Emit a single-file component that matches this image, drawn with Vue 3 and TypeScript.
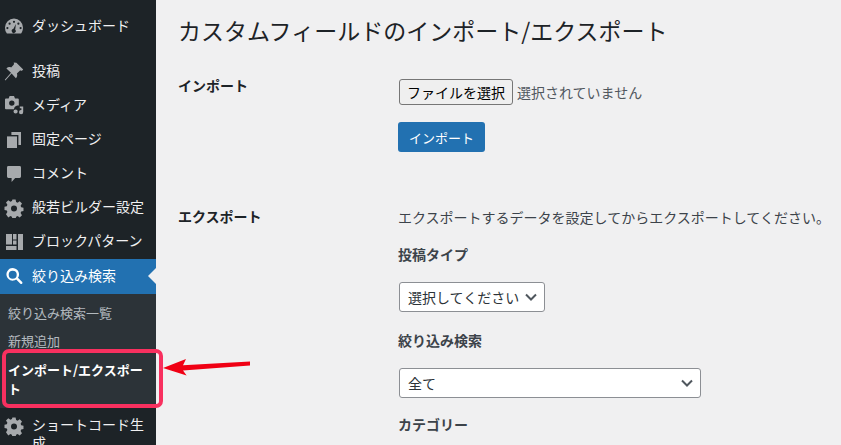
<script setup lang="ts">
interface Item { label: string; icon: string }
const items: Item[] = [
  { label: '投稿', icon: 'pin' },
  { label: 'メディア', icon: 'media' },
  { label: '固定ページ', icon: 'page' },
  { label: 'コメント', icon: 'comment' },
  { label: '般若ビルダー設定', icon: 'gear' },
  { label: 'ブロックパターン', icon: 'block' },
]
const gear = 'M8.4 1.6h3.2l.5 2.5 1.5.6 2.1-1.4 2.3 2.3-1.4 2.1.6 1.5 2.3.5v3.4l-2.3.5-.6 1.5 1.4 2.1-2.3 2.3-2.1-1.4-1.5.6-.5 2.3H8.4l-.5-2.3-1.5-.6-2.1 1.4L2 16.2l1.4-2.1-.6-1.5-2.3-.5V8.7l2.3-.5.6-1.5L2 4.6l2.3-2.3 2.1 1.4 1.5-.6zM10 7.4a3 3 0 1 0 0 6 3 3 0 0 0 0-6z'
</script>

<template>
  <div class="page">
    <aside class="side">
      <a class="item first">
        <svg class="ico" viewBox="0 0 20 20"><path d="M2.9 16.6A9 9 0 0 1 1 10.6a8.8 8.8 0 0 1 18 0c0 2.3-.7 4.4-1.9 6H2.9zM10 3.7a1.1 1.1 0 1 0 0 2.2 1.1 1.1 0 0 0 0-2.2zM5.6 5.6a1.1 1.1 0 1 0 0 2.2 1.1 1.1 0 0 0 0-2.2zm8.8 0a1.1 1.1 0 1 0 0 2.2 1.1 1.1 0 0 0 0-2.2zM3.4 10a1.1 1.1 0 1 0 0 2.2 1.1 1.1 0 0 0 0-2.2zm13.2 0a1.1 1.1 0 1 0 0 2.2 1.1 1.1 0 0 0 0-2.2zM11.9 7l-2.6 5.1a2 2 0 1 0 1.9.6z" fill-rule="evenodd"/></svg>
        <span>ダッシュボード</span>
      </a>
      <a v-for="it in items" :key="it.label" class="item">
        <svg class="ico" viewBox="0 0 20 20">
          <path v-if="it.icon === 'pin'" d="M12.4.8l6.8 6.8-1.5 1.3c-.8-.4-1.6-.4-2.2 0l-2.6 2.6c.7 1.7.3 3.4-1 4.7L7.6 11.4 1.4 18.4l-.6-.6 6.2-7-4.6-4.4c1.3-1.3 3-1.7 4.7-1l2.6-2.6c.4-.6.4-1.4 0-2.2z"/>
          <g v-else-if="it.icon === 'media'">
            <path fill-rule="evenodd" d="M5.6 0h4.4l1 2.4h2.8a1 1 0 0 1 1 1v6.2h-1.4a4 4 0 0 0-3.4 3.6H2a1 1 0 0 1-1-1V3.4a1 1 0 0 1 1-1h2.6zM7.8 4.4a2.7 2.7 0 1 0 0 5.4 2.7 2.7 0 0 0 0-5.4z"/>
            <path d="M15.8 10.6h3.4V16a2.1 2.1 0 1 1-1.8-2v-1.7h-1.6zM11.6 13.4a2.1 2.1 0 1 1 0 4.2 2.1 2.1 0 0 1 0-4.2z"/>
          </g>
          <g v-else-if="it.icon === 'page'">
            <path d="M7.4 2H17v13h-2.6V5H7.4z"/>
            <path d="M3 6.4h10V18H3z"/>
          </g>
          <path v-else-if="it.icon === 'comment'" d="M4.4 2h11.2A1.4 1.4 0 0 1 17 3.4v9.2a1.4 1.4 0 0 1-1.4 1.4h-4.4l-3.6 4v-4H4.4A1.4 1.4 0 0 1 3 12.6V3.4A1.4 1.4 0 0 1 4.4 2z"/>
          <path v-else-if="it.icon === 'gear'" fill-rule="evenodd" :d="gear" />
          <g v-else>
            <path d="M2 2h6v10.5H2zM9 2h3.5v5.5H9zM9 8.5h3.5v4H9zM2 14h10.5v4H2zM14 2h5v16h-5z"/>
          </g>
        </svg>
        <span>{{ it.label }}</span>
      </a>
      <a class="item active">
        <svg class="ico" viewBox="0 0 20 20"><path d="M12.2 12.6a6.3 6.3 0 1 1 1.8-1.8l4.2 4.2a1.3 1.3 0 0 1-1.8 1.8zM8.7 3.8a4 4 0 1 0 0 8 4 4 0 0 0 0-8z" fill-rule="evenodd"/></svg>
        <span>絞り込み検索</span>
      </a>
      <ul class="sub">
        <li>絞り込み検索一覧</li>
        <li>新規追加</li>
        <li class="current">インポート/エクスポート</li>
      </ul>
      <a class="item">
        <svg class="ico" viewBox="0 0 20 20"><path fill-rule="evenodd" :d="gear" /></svg>
        <span>ショートコード生成</span>
      </a>
    </aside>

    <main class="main">
      <h1>カスタムフィールドのインポート/エクスポート</h1>
      <section class="row import">
        <h2>インポート</h2>
        <div class="cell">
          <div class="file">
            <button class="choose" type="button">ファイルを選択</button>
            <span class="none">選択されていません</span>
          </div>
          <button class="primary" type="button">インポート</button>
        </div>
      </section>
      <section class="row export">
        <h2>エクスポート</h2>
        <div class="cell">
          <p class="desc">エクスポートするデータを設定してからエクスポートしてください。</p>
          <h3>投稿タイプ</h3>
          <div class="select small">
            <span>選択してください</span>
            <svg viewBox="0 0 16 16"><path d="M3 5.5l5 5 5-5" fill="none" stroke="#50575e" stroke-width="2"/></svg>
          </div>
          <h3 class="gap">絞り込み検索</h3>
          <div class="select wide">
            <span>全て</span>
            <svg viewBox="0 0 16 16"><path d="M3 5.5l5 5 5-5" fill="none" stroke="#50575e" stroke-width="2"/></svg>
          </div>
          <h3>カテゴリー</h3>
        </div>
      </section>
    </main>

    <div class="mark"></div>
    <svg class="arrow" viewBox="0 0 90 20" width="90" height="20">
      <path d="M1 10L24 1l-3 6.2L88 3.6v4L21 12.6l3.6 5z" fill="#f00014"/>
    </svg>
  </div>
</template>

<style>
html, body { margin: 0; background: #f0f0f1; }
</style>

<style scoped>
.page {
  position: relative;
  display: flex;
  width: 841px;
  height: 445px;
  overflow: hidden;
  background: #f0f0f1;
  color: #3c434a;
  font-family: "Noto Sans CJK JP", "Noto Sans", sans-serif;
  font-size: 14px;
}
.side {
  width: 156px;
  flex: none;
  padding-top: 9px;
  background: #1d2327;
  color: #f0f0f1;
}
.item {
  display: flex;
  align-items: flex-start;
  min-height: 34px;
  line-height: 18px;
  box-sizing: border-box;
  padding: 7px 8px 9px 4px;
  position: relative;
}
.item span { margin-left: 8px; width: 116px; }
.first { margin-bottom: 11px; }
.ico {
  width: 20px;
  height: 20px;
  flex: none;
  margin: 1px 0 -3px;
  fill: #a7aaad;
}
.active {
  margin-top: 1px;
  height: 35px;
  background: #2271b1;
  color: #fff;
}
.active .ico { fill: #fff; }
.active::after {
  content: "";
  position: absolute;
  right: 0;
  top: 9px;
  border: 8px solid transparent;
  border-right-color: #f0f0f1;
}
.sub {
  list-style: none;
  margin: 0;
  padding: 5px 0;
  background: #2c3338;
  color: rgba(240, 246, 252, 0.7);
  font-size: 13px;
}
.sub li {
  padding: 5px 12px 5px 8px;
  line-height: 18px;
}
.sub .current {
  color: #fff;
  font-weight: 600;
  line-height: 19px;
}
.main {
  flex: 1;
  min-width: 0;
  padding-left: 22px;
}
h1 {
  margin: 13px 0 0;
  font-size: 23px;
  font-weight: 400;
  line-height: 34px;
  color: #1d2327;
}
.row { display: flex; }
h2 {
  width: 220px;
  flex: none;
  margin: 0;
  font-size: 14px;
  font-weight: 600;
  line-height: 21px;
  color: #1d2327;
}
.import { margin-top: 28px; }
.file { display: flex; align-items: center; height: 26px; margin-top: 4px; }
.choose {
  box-sizing: border-box;
  width: 114px;
  height: 26px;
  margin-left: 1px;
  padding: 0;
  border: 1px solid #767676;
  border-radius: 3px;
  background: #efefef;
  color: #000;
  font: inherit;
}
.none { margin-left: 4px; color: #50575e; }
.primary {
  display: block;
  box-sizing: border-box;
  width: 87px;
  height: 30px;
  margin-top: 17px;
  padding: 0;
  border: 0;
  border-radius: 3px;
  background: #2271b1;
  color: #fff;
  font: inherit;
  font-size: 13px;
}
.export { margin-top: 54px; }
.desc { margin: 1px 0 0; line-height: 21px; white-space: nowrap; }
h3 {
  margin: 16px 0 0;
  font-size: 14px;
  font-weight: 600;
  line-height: 21px;
  color: #3c434a;
}
h3.gap { margin-top: 18px; }
.select {
  display: flex;
  align-items: center;
  justify-content: space-between;
  box-sizing: border-box;
  height: 30px;
  margin: 17px 0 0 1px;
  padding: 0 5px 0 8px;
  border: 1px solid #8c8f94;
  border-radius: 3px;
  background: #fff;
  color: #2c3338;
}
.select svg { width: 16px; height: 16px; }
.small { width: 146px; }
.wide { width: 302px; }
.mark {
  position: absolute;
  left: 2px;
  top: 349px;
  width: 161px;
  height: 59px;
  box-sizing: border-box;
  border: 4px solid #f8305f;
  border-radius: 7px;
}
.arrow {
  position: absolute;
  left: 162px;
  top: 358px;
}
</style>
